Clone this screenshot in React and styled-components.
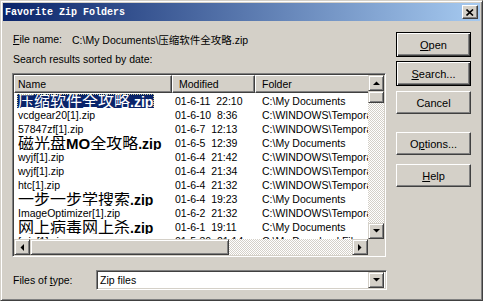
import React from 'react';
import styled, { createGlobalStyle } from 'styled-components';

const GlobalStyle = createGlobalStyle`
  html, body {
    margin: 0;
    padding: 0;
    background: #d4d0c8;
  }
  body {
    font-family: "Liberation Sans", Arial, "Noto Sans CJK SC", sans-serif;
  }
`;

const GRAY = '#d4d0c8';
const NAVY = '#0a246a';

const Window = styled.div`
  width: 483px;
  height: 301px;
  box-sizing: border-box;
  background: ${GRAY};
  border: 1px solid;
  border-color: ${GRAY} #404040 #404040 ${GRAY};
  box-shadow: inset 1px 1px #fff, inset -1px -1px #808080;
  padding: 2px;
  display: flex;
  flex-direction: column;
  overflow: hidden;
`;

const TitleBar = styled.div`
  height: 18px;
  flex: none;
  display: flex;
  align-items: center;
  justify-content: space-between;
  padding: 0 2px 0 2px;
  background: linear-gradient(90deg, ${NAVY} 0%, #a6caf0 100%);
`;

const Title = styled.span`
  color: #fff;
  font-family: "Liberation Mono", "DejaVu Sans Mono", monospace;
  font-weight: bold;
  font-size: 10px;
  letter-spacing: 0;
`;

const CloseButton = styled.div`
  width: 16px;
  height: 14px;
  box-sizing: border-box;
  background: ${GRAY};
  border: 1px solid;
  border-color: #fff #404040 #404040 #fff;
  box-shadow: inset -1px -1px #808080;
  display: flex;
  align-items: center;
  justify-content: center;
`;

const Body = styled.div`
  flex: 1;
  display: flex;
  padding-left: 9px;
  gap: 9px;
`;

const LeftColumn = styled.div`
  width: 375px;
  display: flex;
  flex-direction: column;
  padding-top: 10px;
`;

const TextRow = styled.div`
  height: 16px;
  display: flex;
  align-items: center;
  font-size: 10.5px;
  color: #000;
  margin-top: ${p => p.$gap || 0}px;
  padding-left: 1px;
`;

const Label = styled.span`
  width: ${p => p.$width || 'auto'};
  flex: none;
`;

const PathText = styled.span`
  font-family: "Liberation Sans", "Noto Sans CJK SC", sans-serif;
  font-size: 10.5px;
`;

const ListBox = styled.div`
  margin-top: 6px;
  height: 184px;
  width: 374px;
  box-sizing: border-box;
  border: 1px solid;
  border-color: #808080 #fff #fff #808080;
  box-shadow: inset 1px 1px #404040, inset -1px -1px ${GRAY};
  padding: 1px;
  background: #fff;
  display: grid;
  grid-template-columns: 1fr 16px;
  grid-template-rows: 1fr 16px;
`;

const Content = styled.div`
  overflow: hidden;
  position: relative;
  background: #fff;
`;

const COLS = '158px 83px 200px';

const HeaderRow = styled.div`
  display: grid;
  grid-template-columns: ${COLS};
  height: 18px;
  margin-bottom: 1px;
`;

const HeaderCell = styled.div`
  box-sizing: border-box;
  background: ${GRAY};
  border: 1px solid;
  border-color: #fff #404040 #404040 #fff;
  box-shadow: inset -1px -1px #808080;
  font-size: 10.5px;
  display: flex;
  align-items: center;
  padding-left: ${p => p.$pad || 6}px;
`;

const Row = styled.div`
  display: grid;
  grid-template-columns: ${COLS};
  height: 14px;
  line-height: 14px;
  font-size: 10.5px;
  white-space: pre;
  color: #000;
`;

const Cell = styled.div`
  overflow: hidden;
  padding-left: ${p => p.$pad || 3}px;
  display: flex;
  align-items: center;
`;

const NameText = styled.span`
  display: inline-block;
  line-height: 13px;
  padding: 0 1px;
  font-size: ${p => (p.$big ? '16px' : '10.5px')};
  font-family: ${p => (p.$big ? '"Noto Sans CJK SC", "Liberation Sans", sans-serif' : '"Liberation Sans", Arial, sans-serif')};
  background: ${p => (p.$selected ? NAVY : 'transparent')};
  color: ${p => (p.$selected ? '#fff' : '#000')};
  outline: ${p => (p.$selected ? '1px dotted #c8c890' : 'none')};
  outline-offset: -1px;
`;

const Ext = styled.span`
  font-family: "Liberation Sans", Arial, sans-serif;
  font-weight: bold;
  font-size: 14px;
`;

const Latin = styled.span`
  font-family: "Liberation Sans", Arial, sans-serif;
  font-weight: bold;
  font-size: 15px;
`;

const VScroll = styled.div`
  display: flex;
  flex-direction: column;
  background-color: #fff;
  background-image: repeating-conic-gradient(${GRAY} 0 25%, #fff 0 50%);
  background-size: 2px 2px;
`;

const HScroll = styled.div`
  display: flex;
  background-color: #fff;
  background-image: repeating-conic-gradient(${GRAY} 0 25%, #fff 0 50%);
  background-size: 2px 2px;
`;

const ScrollButton = styled.div`
  width: 16px;
  height: 16px;
  flex: none;
  box-sizing: border-box;
  background: ${GRAY};
  border: 1px solid;
  border-color: ${GRAY} #404040 #404040 ${GRAY};
  box-shadow: inset 1px 1px #fff, inset -1px -1px #808080;
  display: flex;
  align-items: center;
  justify-content: center;
  margin-top: ${p => (p.$end && p.$vertical ? 'auto' : '0')};
  margin-left: ${p => (p.$end && !p.$vertical ? 'auto' : '0')};
`;

const Thumb = styled.div`
  flex: none;
  box-sizing: border-box;
  width: ${p => (p.$vertical ? '16px' : `${p.$size}px`)};
  height: ${p => (p.$vertical ? `${p.$size}px` : '16px')};
  background: ${GRAY};
  border: 1px solid;
  border-color: ${GRAY} #404040 #404040 ${GRAY};
  box-shadow: inset 1px 1px #fff, inset -1px -1px #808080;
`;

const Corner = styled.div`
  background: ${GRAY};
`;

const TypeRow = styled.div`
  margin-top: 13px;
  height: 19px;
  display: flex;
  align-items: center;
  font-size: 10.5px;
  padding-left: 1px;
`;

const Combo = styled.div`
  width: 291px;
  height: 20px;
  box-sizing: border-box;
  margin-left: auto;
  margin-right: 0;
  border: 1px solid;
  border-color: #808080 #fff #fff #808080;
  box-shadow: inset 1px 1px #404040, inset -1px -1px ${GRAY};
  padding: 2px;
  background: #fff;
  display: flex;
  align-items: center;
  font-size: 10.5px;
`;

const ComboText = styled.span`
  flex: 1;
  padding-left: 1px;
`;

const ButtonColumn = styled.div`
  width: 75px;
  display: flex;
  flex-direction: column;
  padding-top: 11px;
`;

const Button = styled.div`
  box-sizing: border-box;
  width: 75px;
  height: ${p => (p.$default ? 25 : 23)}px;
  margin-top: ${p => p.$gap || 0}px;
  background: ${GRAY};
  border: 1px solid;
  border-color: ${p => (p.$default ? '#000' : `#fff #404040 #404040 #fff`)};
  box-shadow: ${p =>
    p.$default
      ? 'inset 1px 1px #fff, inset -1px -1px #404040, inset -2px -2px #808080'
      : 'inset -1px -1px #808080'};
  display: flex;
  align-items: center;
  justify-content: center;
  font-size: 11px;
  color: #000;
`;

const U = styled.span`
  text-decoration: underline;
  text-underline-offset: 1px;
`;

const Arrow = ({ dir }) => {
  const pts = {
    up: '0,4 7,4 3.5,0.5',
    down: '0,0 7,0 3.5,3.5',
    left: '4,0 4,7 0.5,3.5',
    right: '0,0 0,7 3.5,3.5',
  }[dir];
  const horiz = dir === 'left' || dir === 'right';
  return (
    <svg width={horiz ? 4 : 7} height={horiz ? 7 : 4} viewBox={horiz ? '0 0 4 7' : '0 0 7 4'}>
      <polygon points={pts} fill="#000" />
    </svg>
  );
};

const rows = [
  { name: ['压缩软件全攻略', null], big: true, selected: true, date: '01-6-11  22:10', folder: 'C:\\My Documents' },
  { name: 'vcdgear20[1].zip', date: '01-6-10  8:36', folder: 'C:\\WINDOWS\\Temporary Internet Files' },
  { name: '57847zf[1].zip', date: '01-6-7  12:13', folder: 'C:\\WINDOWS\\Temporary Internet Files' },
  { name: ['磁光盘', 'MO', '全攻略'], big: true, date: '01-6-5  12:39', folder: 'C:\\My Documents' },
  { name: 'wyjf[1].zip', date: '01-6-4  21:42', folder: 'C:\\WINDOWS\\Temporary Internet Files' },
  { name: 'wyjf[1].zip', date: '01-6-4  21:34', folder: 'C:\\WINDOWS\\Temporary Internet Files' },
  { name: 'htc[1].zip', date: '01-6-4  21:32', folder: 'C:\\WINDOWS\\Temporary Internet Files' },
  { name: ['一步一步学搜索', null], big: true, date: '01-6-4  19:23', folder: 'C:\\My Documents' },
  { name: 'ImageOptimizer[1].zip', date: '01-6-2  21:32', folder: 'C:\\WINDOWS\\Temporary Internet Files' },
  { name: ['网上病毒网上杀', null], big: true, date: '01-6-1  19:11', folder: 'C:\\My Documents' },
  { name: 'fwin[1].zip', date: '01-5-30  21:14', folder: 'C:\\My Download Files' },
];

const renderName = r => {
  if (!r.big) return r.name;
  const [a, b, c] = r.name;
  return (
    <>
      {a}
      {b && <Latin>{b}</Latin>}
      {c}
      <Ext>.zip</Ext>
    </>
  );
};

export default function App() {
  return (
    <>
      <GlobalStyle />
      <Window>
        <TitleBar>
          <Title>Favorite Zip Folders</Title>
          <CloseButton>
            <svg width="8" height="7" viewBox="0 0 8 7">
              <path d="M0.5 0.5 L7 6.5 M7 0.5 L0.5 6.5" stroke="#000" strokeWidth="1.6" />
            </svg>
          </CloseButton>
        </TitleBar>
        <Body>
          <LeftColumn>
            <TextRow>
              <Label $width="59px">
                <U>F</U>ile name:
              </Label>
              <PathText>C:\My Documents\压缩软件全攻略.zip</PathText>
            </TextRow>
            <TextRow $gap={4}>Search results sorted by date:</TextRow>
            <ListBox>
              <Content>
                <HeaderRow>
                  <HeaderCell $pad={3}>Name</HeaderCell>
                  <HeaderCell>Modified</HeaderCell>
                  <HeaderCell>Folder</HeaderCell>
                </HeaderRow>
                {rows.map((r, i) => (
                  <Row key={i}>
                    <Cell>
                      <NameText $big={r.big} $selected={r.selected}>
                        {renderName(r)}
                      </NameText>
                    </Cell>
                    <Cell>{r.date}</Cell>
                    <Cell $pad={7}>{r.folder}</Cell>
                  </Row>
                ))}
              </Content>
              <VScroll>
                <ScrollButton $vertical>
                  <Arrow dir="up" />
                </ScrollButton>
                <Thumb $vertical $size={12} />
                <ScrollButton $vertical $end>
                  <Arrow dir="down" />
                </ScrollButton>
              </VScroll>
              <HScroll>
                <ScrollButton>
                  <Arrow dir="left" />
                </ScrollButton>
                <Thumb $size={199} />
                <ScrollButton $end>
                  <Arrow dir="right" />
                </ScrollButton>
              </HScroll>
              <Corner />
            </ListBox>
            <TypeRow>
              <Label>
                Files of <U>t</U>ype:
              </Label>
              <Combo>
                <ComboText>Zip files</ComboText>
                <ScrollButton>
                  <Arrow dir="down" />
                </ScrollButton>
              </Combo>
            </TypeRow>
          </LeftColumn>
          <ButtonColumn>
            <Button $default>
              <span>
                <U>O</U>pen
              </span>
            </Button>
            <Button $default $gap={4}>
              <span>
                <U>S</U>earch...
              </span>
            </Button>
            <Button $gap={5}>Cancel</Button>
            <Button $gap={18}>
              <span>
                O<U>p</U>tions...
              </span>
            </Button>
            <Button $gap={9}>
              <span>
                <U>H</U>elp
              </span>
            </Button>
          </ButtonColumn>
        </Body>
      </Window>
    </>
  );
}
